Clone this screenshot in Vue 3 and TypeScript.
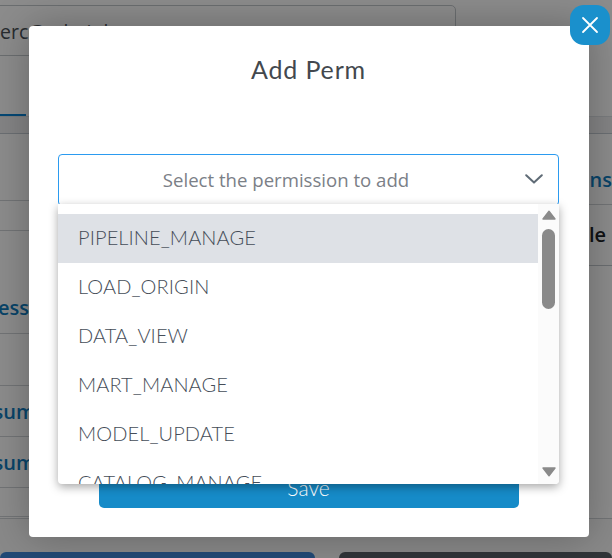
<script setup lang="ts">
const permissions: string[] = [
  'PIPELINE_MANAGE',
  'LOAD_ORIGIN',
  'DATA_VIEW',
  'MART_MANAGE',
  'MODEL_UPDATE',
  'CATALOG_MANAGE',
]
</script>

<template>
  <div class="page">
    <div class="backdrop">
      <div class="email-box">erc@adminl</div>
      <div class="tabs"><span class="tab"></span></div>
      <div class="band"></div>

      <div class="columns">
        <div class="left">
          <div class="row r1"></div>
          <div class="row r2"></div>
          <div class="row r3 link"><span class="access">Access</span></div>
          <div class="row r4"></div>
          <div class="row r5 link"><span class="consume">Consumer</span></div>
          <div class="row r5 link"><span class="consume">Consumer</span></div>
          <div class="row r6"></div>
        </div>
        <div class="right">
          <div class="head link"><span>Actions</span></div>
          <div class="cell"><span>Enable</span></div>
        </div>
      </div>

      <div class="actions">
        <div class="btn-blue"></div>
        <div class="btn-dark"></div>
      </div>
    </div>

    <div class="overlay"></div>

    <div class="modal">
      <h2 class="title">Add Perm</h2>

      <div class="select">
        <span class="placeholder">Select the permission to add</span>
        <svg class="chevron" width="18" height="10" viewBox="0 0 18 10" fill="none">
          <path d="M1.2 1.2 9 8.6l7.8-7.4" stroke="#5f6b76" stroke-width="2" stroke-linecap="round" stroke-linejoin="round" />
        </svg>
      </div>

      <button class="save" type="button">Save</button>

      <div class="dropdown">
        <ul class="list">
          <li v-for="(p, i) in permissions" :key="p" class="item" :class="{ active: i === 0 }">{{ p }}</li>
        </ul>
        <div class="scrollbar">
          <svg class="arrow" width="14" height="10" viewBox="0 0 14 10"><path d="M7 1.2 13 9H1z" fill="#8a8a8a" stroke="#8a8a8a" stroke-width="1.4" stroke-linejoin="round" /></svg>
          <div class="thumb"></div>
          <svg class="arrow down" width="14" height="10" viewBox="0 0 14 10"><path d="M1 1h12L7 8.8z" fill="#8a8a8a" stroke="#8a8a8a" stroke-width="1.4" stroke-linejoin="round" /></svg>
        </div>
      </div>
    </div>

    <button class="close" type="button" aria-label="Close">
      <svg width="18" height="18" viewBox="0 0 18 18" fill="none">
        <path d="M2 2l14 14M16 2 2 16" stroke="#fff" stroke-width="1.8" stroke-linecap="round" />
      </svg>
    </button>
  </div>
</template>

<style>
html,
body {
  margin: 0;
  padding: 0;
  background: #fff;
}
</style>

<style scoped>
.page {
  position: relative;
  width: 612px;
  height: 558px;
  overflow: hidden;
  font-family: Lato, "Open Sans", sans-serif;
}

.backdrop {
  display: flex;
  flex-direction: column;
  height: 558px;
  background: #fff;
}

.email-box {
  box-sizing: border-box;
  margin: 5px 0 0 -20px;
  width: 476px;
  height: 51px;
  padding: 13px 0 0 19px;
  border: 1px solid #c4c8cc;
  border-radius: 5px;
  font-family: "Open Sans", sans-serif;
  font-size: 19.5px;
  line-height: 26px;
  color: #495057;
  white-space: nowrap;
}

.tabs {
  height: 60px;
  display: flex;
  align-items: flex-end;
  flex: none;
}

.tab {
  width: 26px;
  height: 2px;
  background: #0a84d6;
}

.band {
  height: 16px;
  flex: none;
  background: #f0f1f3;
  border-top: 1px solid #dee2e6;
  border-bottom: 1px solid #c4cad2;
}

.columns {
  display: flex;
  justify-content: space-between;
  height: 384px;
  flex: none;
}

.left {
  width: 40px;
  display: flex;
  flex-direction: column;
  overflow: hidden;
}

.right {
  width: 33px;
  display: flex;
  flex-direction: column;
  overflow: hidden;
}

.row {
  box-sizing: border-box;
  width: 40px;
  border-bottom: 1px solid #d0d4d8;
  display: flex;
  align-items: center;
  white-space: nowrap;
}

.r1 { height: 67px; }
.r2 { height: 30px; }
.r3 { height: 103px; padding-top: 50px; }
.r4 { height: 52px; }
.r5 { height: 51px; }
.r6 { height: 29px; }

.access {
  margin-left: -35px;
}

.consume {
  margin-left: -44px;
}

.link {
  font-family: "Open Sans", sans-serif;
  font-size: 20px;
  font-weight: 600;
  color: #0f7cc0;
}

.head {
  box-sizing: border-box;
  height: 71px;
  border-bottom: 1px solid #d0d4d8;
  display: flex;
  align-items: center;
  justify-content: flex-end;
  padding-top: 20px;
  white-space: nowrap;
}

.cell {
  box-sizing: border-box;
  height: 61px;
  border-bottom: 1px solid #c4c9ce;
  display: flex;
  align-items: center;
  font-family: "Open Sans", sans-serif;
  font-size: 20px;
  font-weight: 600;
  color: #1d2226;
  white-space: nowrap;
  justify-content: flex-end;
  padding-right: 6px;
  padding-bottom: 2px;
}

.actions {
  flex: 1;
  display: flex;
  align-items: flex-end;
  justify-content: space-between;
  background: #fafafa;
  border-top: 1px solid #d0d4d8;
}

.btn-blue {
  width: 315px;
  height: 6px;
  background: #3f87d8;
  border-radius: 6px 6px 0 0;
}

.btn-dark {
  width: 273px;
  height: 6px;
  background: #5a6268;
  border-radius: 6px 6px 0 0;
}

.overlay {
  position: absolute;
  inset: 0;
  background: rgba(0, 0, 0, 0.45);
}

.modal {
  position: absolute;
  left: 29px;
  top: 26px;
  box-sizing: border-box;
  width: 560px;
  height: 511px;
  padding: 28px 30px 29px 29px;
  display: flex;
  flex-direction: column;
  align-items: center;
  background: #fff;
  border-radius: 4px;
  box-shadow: 0 0 40px rgba(0, 0, 0, 0.28);
}

.title {
  margin: 0;
  height: 100px;
  font-size: 25px;
  line-height: 30px;
  font-weight: 400;
  color: #43484e;
  letter-spacing: 0.85px;
}

.select {
  box-sizing: border-box;
  position: relative;
  width: 100%;
  height: 52px;
  flex: none;
  display: flex;
  align-items: center;
  justify-content: center;
  padding: 0 45px 2px 0;
  border: 1px solid #2b9bf0;
  border-radius: 4px;
}

.placeholder {
  font-family: "Open Sans", sans-serif;
  font-size: 18.6px;
  color: #7b8087;
}

.chevron {
  position: absolute;
  right: 15px;
  top: 19px;
}

.save {
  margin-top: auto;
  width: 420px;
  height: 40px;
  flex: none;
  border: 0;
  border-radius: 5px;
  background: #168bc8;
  color: #fff;
  font-family: Lato, sans-serif;
  font-size: 21px;
  font-weight: 300;
  padding: 0 0 2px;
}

.dropdown {
  position: absolute;
  left: 29px;
  top: 178px;
  width: 501px;
  height: 280px;
  display: flex;
  background: #fff;
  border-radius: 0 0 4px 4px;
  box-shadow: 0 3px 10px rgba(0, 0, 0, 0.35);
  overflow: hidden;
}

.list {
  list-style: none;
  margin: 0;
  padding: 10px 0 0;
  flex: 1;
  min-width: 0;
  height: 270px;
  overflow: hidden;
}

.item {
  box-sizing: border-box;
  height: 49px;
  padding: 0 0 4px 20px;
  display: flex;
  align-items: center;
  font-family: Lato, sans-serif;
  font-size: 20px;
  font-weight: 300;
  color: #454d58;
  letter-spacing: 0.1px;
}

.item.active {
  background: #dee1e6;
}

.scrollbar {
  width: 21px;
  flex: none;
  background: #fbfbfb;
  display: flex;
  flex-direction: column;
  align-items: center;
}

.arrow {
  margin-top: 6px;
  flex: none;
}

.thumb {
  width: 13px;
  height: 80px;
  margin-top: 9px;
  border-radius: 7px;
  background: #8a8a8a;
  flex: none;
}

.arrow.down {
  margin-top: auto;
  margin-bottom: 7px;
}

.close {
  position: absolute;
  left: 570px;
  top: 5px;
  width: 40px;
  height: 40px;
  padding: 0;
  border: 0;
  border-radius: 14px;
  background: #1a90cc;
  display: flex;
  align-items: center;
  justify-content: center;
}
</style>
